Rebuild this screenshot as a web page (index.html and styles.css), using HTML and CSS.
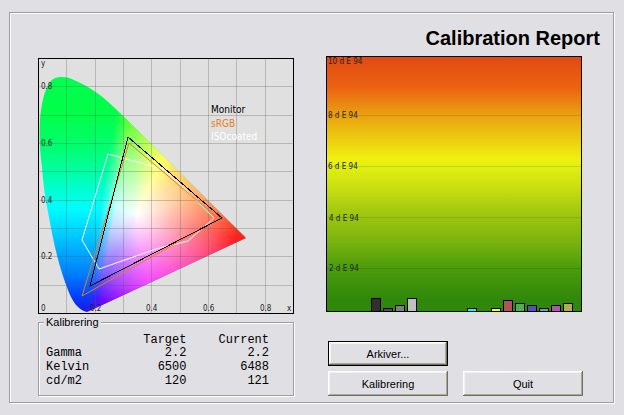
FILE: index.html
```html
<!DOCTYPE html>
<html lang="en">
<head>
    <meta charset="UTF-8">
    <meta name="viewport" content="width=device-width, initial-scale=1.0">
    <title>Calibration Report</title>
    <link rel="stylesheet" href="styles.css">
</head>
<body>
    <main class="report">
        <section class="column column-left">
            <div class="gamut">
                <div class="gamut-fill"><div class="gamut-warm"></div></div>
                <svg class="chart" viewBox="0 0 256 256" role="img" aria-label="CIE xy gamut">
                    <path class="grid" d="M28.5 1V255M57.5 1V255M85.5 1V255M113.5 1V255M142.5 1V255M170.5 1V255M198.5 1V255M227.5 1V255M1 28.5H255M1 57.5H255M1 85.5H255M1 113.5H255M1 142.5H255M1 170.5H255M1 198.5H255M1 227.5H255"/>
                    <polygon class="iso" points="70,96 125,111 146,130 176,160 150,183 118,191 61,211 44,182"/>
                    <polygon class="srgb" points="91,85 181,161 44,238"/>
                    <polygon class="monitor" points="90,79 184,160 52,228"/>
                    <g class="axis">
                        <text x="3" y="8">y</text>
                        <text x="3" y="31">0.8</text>
                        <text x="3" y="88">0.6</text>
                        <text x="3" y="145">0.4</text>
                        <text x="3" y="201">0.2</text>
                        <text x="3" y="253">0</text>
                        <text x="52" y="253">0.2</text>
                        <text x="108" y="253">0.4</text>
                        <text x="165" y="253">0.6</text>
                        <text x="222" y="253">0.8</text>
                        <text x="249" y="253">x</text>
                    </g>
                    <g class="key">
                        <text x="173" y="55">Monitor</text>
                        <text class="key-srgb" x="173" y="69">sRGB</text>
                        <text class="key-iso" x="173" y="82">ISOcoated</text>
                    </g>
                    <rect class="outline" x="0.5" y="0.5" width="255" height="255"/>
                </svg>
            </div>
            <fieldset class="results">
                <legend>Kalibrering</legend>
                <table>
                    <thead>
                        <tr><td></td><th scope="col">Target</th><th scope="col">Current</th></tr>
                    </thead>
                    <tbody>
                        <tr><th scope="row">Gamma</th><td>2.2</td><td>2.2</td></tr>
                        <tr><th scope="row">Kelvin</th><td>6500</td><td>6488</td></tr>
                        <tr><th scope="row">cd/m2</th><td>120</td><td>121</td></tr>
                    </tbody>
                </table>
            </fieldset>
        </section>

        <section class="column">
            <h1>Calibration Report</h1>
            <div class="delta">
                <svg class="chart" viewBox="0 0 256 256" role="img" aria-label="Delta E 94 per patch">
                    <path class="levels" d="M1 59.5H255M1 110.5H255M1 161.5H255M1 212.5H255"/>
                    <g class="axis">
                        <text x="2" y="8">10 d E 94</text>
                        <text x="2" y="62">8 d E 94</text>
                        <text x="2" y="113">6 d E 94</text>
                        <text x="3" y="165">4 d E 94</text>
                        <text x="3" y="215">2 d E 94</text>
                    </g>
                    <g class="bars">
                        <rect x="45.5" y="242.5" width="9" height="13" fill="#303030"/>
                        <rect x="57.5" y="252.5" width="9" height="3" fill="#505050"/>
                        <rect x="69.5" y="249.5" width="9" height="6" fill="#808080"/>
                        <rect x="81.5" y="242.5" width="9" height="13" fill="#c0c0c0"/>
                        <rect x="141.5" y="252.5" width="9" height="3" fill="#00ffff"/>
                        <rect x="165.5" y="252.5" width="9" height="3" fill="#ffff00"/>
                        <rect x="177.5" y="244.5" width="9" height="11" fill="#b05458"/>
                        <rect x="189.5" y="247.5" width="9" height="8" fill="#54ac58"/>
                        <rect x="201.5" y="249.5" width="9" height="6" fill="#5454b0"/>
                        <rect x="213.5" y="252.5" width="9" height="3" fill="#54acac"/>
                        <rect x="225.5" y="249.5" width="9" height="6" fill="#b054b0"/>
                        <rect x="237.5" y="247.5" width="9" height="8" fill="#b0ac58"/>
                    </g>
                    <rect class="outline" x="0.5" y="0.5" width="255" height="255"/>
                </svg>
            </div>
            <div class="actions">
                <button type="button" class="btn btn-default">Arkiver...</button>
                <button type="button" class="btn btn-calibrate">Kalibrering</button>
                <button type="button" class="btn">Quit</button>
            </div>
        </section>
    </main>
</body>
</html>
```
FILE: styles.css
```css
* {
    box-sizing: border-box;
}
body {
    margin: 0;
    padding: 12px 10px 12px 9px;
    background: #e0dfe4;
    color: #000;
    font-family: "Liberation Sans", Arial, sans-serif;
    font-size: 11px;
}
.report {
    display: grid;
    grid-template-columns: 1fr 1fr;
    gap: 32px;
    padding: 0 31px 6px 28px;
    border: 1px solid #9d9da1;
    box-shadow: 1px 1px 0 #fff, inset 1px 1px 0 #fff;
}
.column {
    min-width: 0;
}
.column-left {
    padding-top: 45px;
}
h1 {
    margin: 0 -18px 0 0;
    padding: 13px 0 6px;
    font-size: 20px;
    line-height: 24px;
    text-align: right;
    white-space: nowrap;
}

/* charts */
.chart {
    display: block;
    width: 100%;
    height: auto;
}
.gamut {
    display: grid;
    background: #e0e0e0;
}
.gamut > * {
    grid-area: 1 / 1;
}
.gamut .chart {
    z-index: 1;
}
.gamut-fill {
    display: grid;
    background: linear-gradient(#00ff50 8%, #00ff48 22%, #00ff70 35%, #00ffa8 45%, #00ffe0 54%, #00fcff 59%, #00e0ff 65%, #00a8ff 76%, #0080ff 84%, #0048ff 92%, #1818e8 99%);
    clip-path: path("M49 254 C40 252 34 243 30 232 C24 217 18 196 14 175 L9 149 C6 132 5 122 4 109 C2 95 1 80 2 62 C3 48 6 32 12 24 C15 20 19 19 24 19 C29 19 32 20 36 22 C58 31 73 46 84 57 L208 180 Z");
}
/* warm side of the locus, fades into the green/blue edge */
.gamut-warm {
    background:
        radial-gradient(ellipse 40% 36% at 39% 61%, #fff 0%, rgba(255, 255, 255, 0.85) 15%, rgba(255, 255, 255, 0.55) 45%, rgba(255, 255, 255, 0.25) 78%, rgba(255, 255, 255, 0) 100%),
        conic-gradient(from 0deg at 38% 61%,
            #70ff30 0deg, #c0ff10 14deg, #ffff00 27deg, #ffb800 48deg,
            #ff7810 75deg, #ff2018 103deg, #ff1070 125deg, #ff00c8 150deg,
            #f000ff 170deg, #a000ff 190deg, #5010ff 205deg, #3060ff 230deg,
            #00c0ff 265deg, #00ffe0 290deg, #10ff70 330deg, #50ff38 350deg, #70ff30 360deg);
    -webkit-mask-image: linear-gradient(99deg, transparent 29%, #000 34%);
    mask-image: linear-gradient(99deg, transparent 29%, #000 34%);
}
.outline {
    fill: none;
    stroke: #000;
}
.grid {
    stroke: rgba(90, 90, 80, 0.3);
}
.iso,
.srgb,
.monitor {
    fill: none;
}
.iso {
    stroke: #fff;
}
.srgb {
    stroke: #e87c14;
}
.monitor {
    stroke: #000;
    shape-rendering: crispEdges;
}
.axis {
    font-family: "DejaVu Sans Condensed", Tahoma, sans-serif;
    font-size: 8px;
    fill: #222;
}
.key {
    font-family: "DejaVu Sans Condensed", Tahoma, sans-serif;
    font-size: 10px;
}
.key-srgb {
    fill: #e87c14;
}
.key-iso {
    fill: #fff;
}
.delta {
    background: linear-gradient(#e24812 0%, #ea6212 12%, #eaa010 23%, #ecd410 34%, #f0f010 40%, #e2f010 43%, #cce010 51%, #aacc10 59%, #7cb40e 72%, #4c9c0c 83%, #30880a 95%, #30880a 100%);
}
.levels {
    stroke: rgba(0, 0, 0, 0.12);
}
.bars {
    stroke: #000;
}

/* measured values */
.results {
    min-width: 0;
    margin: 1px 0 0;
    padding: 5px 24px 7px 7px;
    border: 1px solid #9d9da1;
    box-shadow: 1px 1px 0 #fff, inset 1px 1px 0 #fff;
}
.results legend {
    margin-left: -2px;
    padding: 0 2px;
    background: #e0dfe4;
    line-height: 14px;
}
.results table {
    width: 100%;
    border-collapse: collapse;
    font-family: "Liberation Mono", "Courier New", monospace;
    font-size: 12px;
    line-height: 14px;
}
.results th,
.results td {
    width: 37%;
    padding: 0;
    font-weight: normal;
    text-align: right;
}
.results thead {
    line-height: 12px;
}
.results tr > :first-child {
    width: 26%;
    text-align: left;
}

/* buttons */
.actions {
    display: grid;
    grid-template-columns: 1fr 1fr;
    gap: 5px 15px;
    margin: 29px -1px 0 2px;
}
.btn {
    height: 25px;
    padding: 0;
    border: 0;
    border-radius: 0;
    background: #e0dfe4;
    box-shadow: inset -1px -1px 0 #716f64, inset 1px 1px 0 #fff, inset -2px -2px 0 #aca899, inset 2px 2px 0 #f4f3ee;
    color: #000;
    font-family: inherit;
    font-size: 11px;
}
.btn-default {
    border: 1px solid #000;
}
.btn-calibrate {
    grid-column: 1;
}
```
